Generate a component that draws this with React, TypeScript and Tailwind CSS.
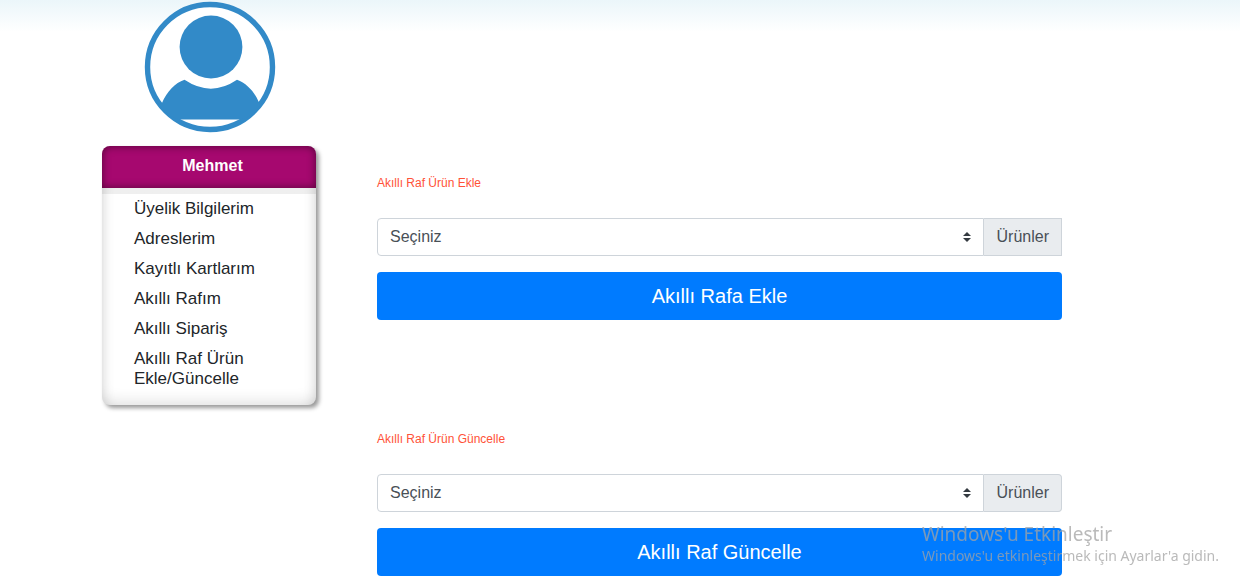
const menuItems = [
  'Üyelik Bilgilerim',
  'Adreslerim',
  'Kayıtlı Kartlarım',
  'Akıllı Rafım',
  'Akıllı Sipariş',
  'Akıllı Raf Ürün Ekle/Güncelle',
];

function Avatar() {
  return (
    <svg viewBox="0 0 132 132" className="ml-[42px] block size-[132px]" role="img" aria-label="Profil">
      <circle cx="66" cy="66" r="62.5" fill="#fff" stroke="#328ac8" strokeWidth="5.4" />
      <circle cx="67" cy="46" r="31.4" fill="#328ac8" />
      <path
        d="M40.5 78.8Q67 96.5 93 78.8C103 82.5 110.5 91 114.8 101L117 104Q109 117 94 118.5H38Q23 117 14 102L18 102C23 90.5 31 82 40.5 78.8Z"
        fill="#328ac8"
      />
    </svg>
  );
}

type ShelfFormProps = {
  id: string;
  title: string;
  action: string;
  rounded?: boolean;
};

function ShelfForm({ id, title, action, rounded = false }: ShelfFormProps) {
  return (
    <form onSubmit={(e) => e.preventDefault()}>
      <h2 className="text-xs leading-4 text-[#ff5238]">{title}</h2>
      <div className="mt-[27px] flex h-[38px]">
        <div className="relative min-w-0 flex-1">
          <select
            id={id}
            className="block h-full w-full appearance-none rounded-l border border-[#ced4da] bg-white pr-7 pb-px pl-3 text-base text-[#495057]"
          >
            <option>Seçiniz</option>
          </select>
          <svg viewBox="0 0 8 10" className="pointer-events-none absolute top-[14px] right-[13px] h-[10px] w-2" aria-hidden="true">
            <path d="M4 0 0 4h8zM4 10 0 6h8z" fill="#343a40" />
          </svg>
        </div>
        <label
          htmlFor={id}
          className={`flex items-center border border-l-0 border-[#ced4da] bg-[#e9ecef] pr-3 pb-px pl-[13px] text-base text-[#495057] ${rounded ? 'rounded-r' : ''}`}
        >
          Ürünler
        </label>
      </div>
      <button type="submit" className="mt-4 block h-12 w-full rounded bg-[#007bff] text-xl text-white">
        {action}
      </button>
    </form>
  );
}

export default function App() {
  return (
    <div className="relative min-h-screen bg-white bg-linear-to-b from-[#ebf6fa] to-white to-[32px] pl-[102px] pr-[178px] font-['Liberation_Sans',Arial,sans-serif]">
      <div className="flex gap-[61px]">
        <aside className="w-[214px] shrink-0 pt-px">
          <Avatar />
          <div className="mt-[13px] rounded-lg bg-white shadow-[3px_3px_4px_rgba(0,0,0,0.4)]">
            <h1 className="flex h-[42px] items-center justify-center rounded-t-lg bg-[#a6086f] pb-[3px] pl-[7px] text-base font-bold text-white shadow-[inset_0_0_8px_rgba(0,0,0,0.5)]">
              Mehmet
            </h1>
            <div className="rounded-b-lg bg-linear-to-b from-[#efefef] from-[6px] to-transparent to-[6px]">
              <nav className="rounded-b-lg pt-[11px] pr-8 pb-4 pl-8 shadow-[inset_0_-8px_16px_-6px_rgba(0,0,0,0.14),inset_14px_0_14px_-14px_rgba(0,0,0,0.14),inset_-14px_0_14px_-14px_rgba(0,0,0,0.14)]">
                <ul className="flex flex-col gap-[10px]">
                  {menuItems.map((item) => (
                    <li key={item} className="text-[17px] leading-5 text-[#212529]">
                      <a href="#">{item}</a>
                    </li>
                  ))}
                </ul>
              </nav>
            </div>
          </div>
        </aside>
        <main className="flex min-w-0 flex-1 flex-col gap-[111px] pt-[175px]">
          <ShelfForm id="urun-ekle" title="Akıllı Raf Ürün Ekle" action="Akıllı Rafa Ekle" />
          <ShelfForm id="urun-guncelle" title="Akıllı Raf Ürün Güncelle" action="Akıllı Raf Güncelle" rounded />
        </main>
      </div>
      <div className="pointer-events-none fixed right-[21px] bottom-5 font-['Noto_Sans',sans-serif] text-[#a3a3a3]/75">
        <p className="text-[19px] leading-6">Windows'u Etkinleştir</p>
        <p className="text-sm leading-5">Windows'u etkinleştirmek için Ayarlar'a gidin.</p>
      </div>
    </div>
  );
}
